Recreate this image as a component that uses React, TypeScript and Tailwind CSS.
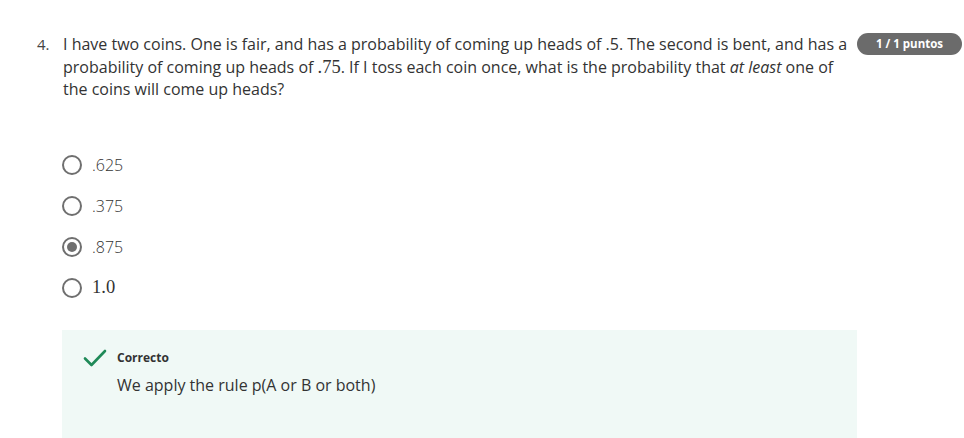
const options = [
  { label: ".625", serif: false, checked: false },
  { label: ".375", serif: false, checked: false },
  { label: ".875", serif: false, checked: true },
  { label: "1.0", serif: true, checked: false },
];

function Radio({ checked }: { checked: boolean }) {
  return (
    <span className="flex h-[20px] w-[20px] items-center justify-center rounded-full border-2 border-[#6f6f6f] bg-white">
      {checked && <span className="h-[10px] w-[10px] rounded-full bg-[#6f6f6f]" />}
    </span>
  );
}

function Check() {
  return (
    <svg width="24" height="20" viewBox="0 0 24 20" fill="none">
      <path d="M2 10.5 L8.5 17 L22 3" stroke="#1f8a58" strokeWidth="2.6" strokeLinecap="round" strokeLinejoin="round" />
    </svg>
  );
}

export default function App() {
  return (
    <div className="h-[438px] w-[964px] overflow-hidden bg-white text-[#333] font-['Open_Sans',sans-serif]">
      <div className="flex pt-[33px] pl-[37px] pr-[2px]">
        <span className="w-[26px] text-[15px] leading-[22px] text-[#444]">4.</span>
        <p className="w-[790px] text-[16px] leading-[22.5px] text-[#333]">
          I have two coins. One is fair, and has a probability of coming up heads of .5. The second is bent, and has a
          probability of coming up heads of{" "}
          <span className="font-['Liberation_Serif',serif] text-[18.5px] leading-[16px]">.75</span>. If I toss each
          coin once, what is the probability that <i>at least</i> one of the coins will come up heads?
        </p>
        <div className="ml-auto flex h-[22px] w-[105px] shrink-0 items-center justify-center rounded-full bg-[#6b6b6b] text-[11.5px] font-bold text-white">
          1 / 1 puntos
        </div>
      </div>

      <div className="mt-[54px] flex flex-col gap-[21px] pl-[62px]">
        {options.map((o) => (
          <div key={o.label} className="flex h-[20px] items-center gap-[10px]">
            <Radio checked={o.checked} />
            <span
              className={
                o.serif
                  ? "font-['Liberation_Serif',serif] text-[18.5px] text-[#333]"
                  : "text-[16px] font-light text-[#333]"
              }
            >
              {o.label}
            </span>
          </div>
        ))}
      </div>

      <div className="ml-[62px] mt-[32px] h-[120px] w-[795px] bg-[#f0f9f6] pl-[21px] pt-[18px]">
        <div className="flex items-start gap-[10px]">
          <Check />
          <div className="flex flex-col">
            <span className="mt-[1px] text-[12px] font-bold leading-[18px] text-[#333]">Correcto</span>
            <span className="mt-[7px] text-[16px] leading-[22px] text-[#333]">We apply the rule p(A or B or both)</span>
          </div>
        </div>
      </div>
    </div>
  );
}
